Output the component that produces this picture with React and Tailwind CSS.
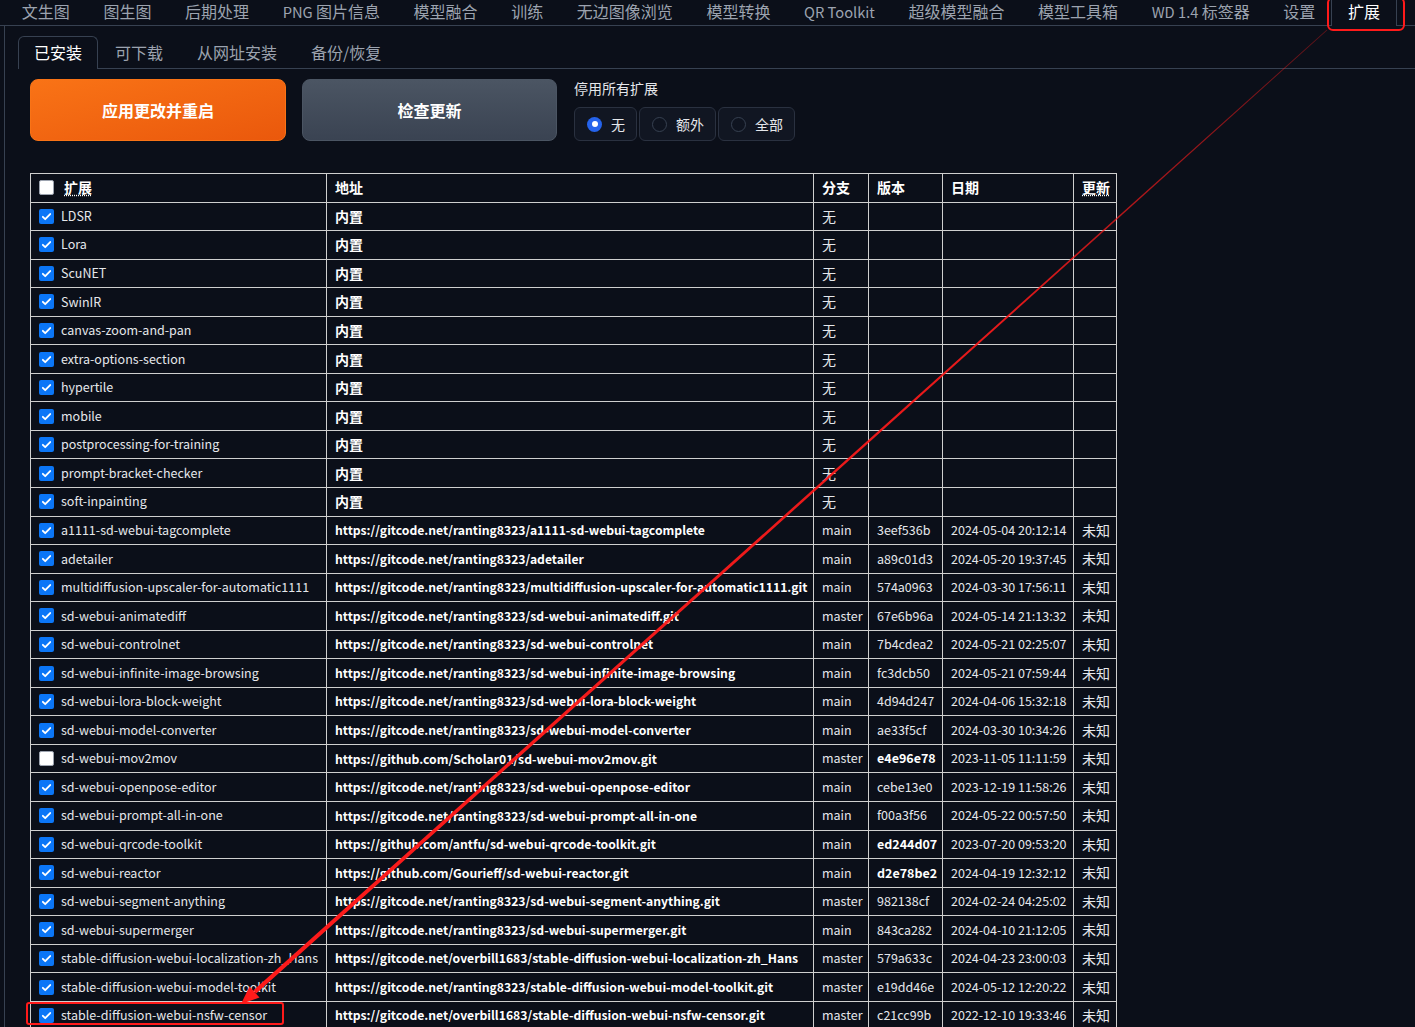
import React from 'react'

// Latin runs in the tab bar are a bit narrower than the CJK ones
const topTabs = [['文生图'], ['图生图'], ['后期处理'], ['PNG ', '图片信息'], ['模型融合'], ['训练'], ['无边图像浏览'], ['模型转换'], ['QR Toolkit', ''], ['超级模型融合'], ['模型工具箱'], ['WD 1.4 ', '标签器'], ['设置'], ['扩展']]
const subTabs = ['已安装', '可下载', '从网址安装', '备份/恢复']

const builtins = ['LDSR', 'Lora', 'ScuNET', 'SwinIR', 'canvas-zoom-and-pan', 'extra-options-section', 'hypertile', 'mobile', 'postprocessing-for-training', 'prompt-bracket-checker', 'soft-inpainting']

const gc = 'https://gitcode.net/ranting8323/'
const extensions = [
    ['a1111-sd-webui-tagcomplete', gc + 'a1111-sd-webui-tagcomplete', 'main', '3eef536b', '2024-05-04 20:12:14'],
    ['adetailer', gc + 'adetailer', 'main', 'a89c01d3', '2024-05-20 19:37:45'],
    ['multidiffusion-upscaler-for-automatic1111', gc + 'multidiffusion-upscaler-for-automatic1111.git', 'main', '574a0963', '2024-03-30 17:56:11'],
    ['sd-webui-animatediff', gc + 'sd-webui-animatediff.git', 'master', '67e6b96a', '2024-05-14 21:13:32'],
    ['sd-webui-controlnet', gc + 'sd-webui-controlnet', 'main', '7b4cdea2', '2024-05-21 02:25:07'],
    ['sd-webui-infinite-image-browsing', gc + 'sd-webui-infinite-image-browsing', 'main', 'fc3dcb50', '2024-05-21 07:59:44'],
    ['sd-webui-lora-block-weight', gc + 'sd-webui-lora-block-weight', 'main', '4d94d247', '2024-04-06 15:32:18'],
    ['sd-webui-model-converter', gc + 'sd-webui-model-converter', 'main', 'ae33f5cf', '2024-03-30 10:34:26'],
    ['sd-webui-mov2mov', 'https://github.com/Scholar01/sd-webui-mov2mov.git', 'master', 'e4e96e78', '2023-11-05 11:11:59', true, true],
    ['sd-webui-openpose-editor', gc + 'sd-webui-openpose-editor', 'main', 'cebe13e0', '2023-12-19 11:58:26'],
    ['sd-webui-prompt-all-in-one', gc + 'sd-webui-prompt-all-in-one', 'main', 'f00a3f56', '2024-05-22 00:57:50'],
    ['sd-webui-qrcode-toolkit', 'https://github.com/antfu/sd-webui-qrcode-toolkit.git', 'main', 'ed244d07', '2023-07-20 09:53:20', true],
    ['sd-webui-reactor', 'https://github.com/Gourieff/sd-webui-reactor.git', 'main', 'd2e78be2', '2024-04-19 12:32:12', true],
    ['sd-webui-segment-anything', gc + 'sd-webui-segment-anything.git', 'master', '982138cf', '2024-02-24 04:25:02'],
    ['sd-webui-supermerger', gc + 'sd-webui-supermerger.git', 'main', '843ca282', '2024-04-10 21:12:05'],
    ['stable-diffusion-webui-localization-zh_Hans', 'https://gitcode.net/overbill1683/stable-diffusion-webui-localization-zh_Hans', 'master', '579a633c', '2024-04-23 23:00:03'],
    ['stable-diffusion-webui-model-toolkit', gc + 'stable-diffusion-webui-model-toolkit.git', 'master', 'e19dd46e', '2024-05-12 12:20:22'],
    ['stable-diffusion-webui-nsfw-censor', 'https://gitcode.net/overbill1683/stable-diffusion-webui-nsfw-censor.git', 'master', 'c21cc99b', '2022-12-10 19:33:46'],
]

const Check = ({ checked }) => (
    checked ? (
        <span className="flex h-[15px] w-[15px] shrink-0 items-center justify-center rounded-[2px] bg-[#0b76f7]">
            <svg width="11" height="11" viewBox="0 0 12 12" fill="none">
                <path d="M2 6.3l2.6 2.6L10 3.3" stroke="#fff" strokeWidth="2" strokeLinecap="round" strokeLinejoin="round" />
            </svg>
        </span>
    ) : (
        <span className="h-[15px] w-[15px] shrink-0 rounded-[2px] border border-[#9ca3af] bg-white"></span>
    )
)

const Radio = ({ label, selected }) => (
    <div className="flex h-[34px] items-center gap-[9px] rounded-md border border-[#2a3140] bg-[#111622] pl-[12px] pr-[11px] text-[14px] text-[#e5e7eb]">
        {selected ? (
            <span className="flex h-[15px] w-[15px] items-center justify-center rounded-full bg-[#2563eb]">
                <span className="h-[6px] w-[6px] rounded-full bg-white"></span>
            </span>
        ) : (
            <span className="h-[15px] w-[15px] rounded-full border border-[#374151] bg-[#0f1420]"></span>
        )}
        {label}
    </div>
)

const cell = 'border border-[#cfcfcf] px-2 whitespace-nowrap overflow-hidden'
const lat = ' text-[12.5px]'
const cjk = ' text-[14px]'

export default function App() {
    return (
        <div className="relative h-[1027px] w-[1415px] overflow-hidden bg-[#0b0f19] font-['Noto_Sans_CJK_SC',sans-serif] text-[#e5e7eb]">
            {/* top tab bar */}
            <nav className="flex h-[26px] border-b border-[#374151] pl-[5px]">
                {topTabs.map(([a, b]) => {
                    const label = b === undefined
                        ? a
                        : <><span className="text-[14.7px]">{a}</span>{b}</>
                    return a === '扩展' ? (
                        <div key={a} className="ml-[-1px] h-[26px] border-x border-[#374151] bg-[#0b0f19] px-4 text-[16px] leading-[22px] text-white">{label}</div>
                    ) : (
                        <div key={a} className="px-[16.8px] text-[16px] leading-[22px] text-[#9ca3af] whitespace-nowrap">{label}</div>
                    )
                })}
            </nav>

            <div className="ml-[4px] border-l border-[#374151] pl-[13px] pt-[10px]">
                {/* sub tabs */}
                <div className="flex h-[33px] border-b border-[#374151]">
                    {subTabs.map((t, i) => (
                        i === 0 ? (
                            <div key={t} className="h-[33px] rounded-t-md border-x border-t border-[#374151] bg-[#0b0f19] px-[15px] text-[16px] leading-[31px] text-white">{t}</div>
                        ) : (
                            <div key={t} className="h-[32px] border border-transparent px-4 text-[16px] leading-[31px] text-[#9ca3af]">{t}</div>
                        )
                    ))}
                </div>

                <div className="pl-[12px] pt-[10px]">
                    <div className="flex items-start">
                        <button className="h-[62px] w-[256px] rounded-lg border border-[#f97316] bg-gradient-to-br from-[#f97316] to-[#ea580c] text-[16px] font-bold text-white">应用更改并重启</button>
                        <button className="ml-4 h-[62px] w-[255px] rounded-lg border border-[#4b5563] bg-gradient-to-b from-[#4b5563] to-[#3a4352] text-[16px] font-bold text-white">检查更新</button>
                        <div className="ml-[17px]">
                            <div className="text-[14px] leading-[18px] text-[#e5e7eb]">停用所有扩展</div>
                            <div className="mt-[10px] flex gap-[2px]">
                                <Radio label="无" selected />
                                <Radio label="额外" />
                                <Radio label="全部" />
                            </div>
                        </div>
                    </div>

                    <table className="mt-[32px] w-[1087px] table-fixed border-collapse">
                        <colgroup>
                            <col className="w-[296px]" />
                            <col className="w-[487px]" />
                            <col className="w-[55px]" />
                            <col className="w-[74px]" />
                            <col className="w-[131px]" />
                            <col className="w-[43px]" />
                        </colgroup>
                        <thead>
                            <tr className="h-[28.55px] text-left text-[14px] font-bold text-white">
                                <th className={cell}>
                                    <div className="flex items-center gap-[10px]">
                                        <Check checked={false} />
                                        <span className="underline decoration-dotted underline-offset-2">扩展</span>
                                    </div>
                                </th>
                                <th className={cell}>地址</th>
                                <th className={cell}>分支</th>
                                <th className={cell}>版本</th>
                                <th className={cell}>日期</th>
                                <th className={cell}><span className="underline decoration-dotted underline-offset-2">更新</span></th>
                            </tr>
                        </thead>
                        <tbody>
                            {builtins.map((name) => (
                                <tr key={name} className="h-[28.55px]">
                                    <td className={cell + lat}>
                                        <div className="flex items-center gap-[7px]"><Check checked />{name}</div>
                                    </td>
                                    <td className={cell + cjk + ' font-bold text-white'}>内置</td>
                                    <td className={cell + cjk}>无</td>
                                    <td className={cell}></td>
                                    <td className={cell}></td>
                                    <td className={cell}></td>
                                </tr>
                            ))}
                            {extensions.map(([name, url, branch, ver, date, github, off]) => (
                                <tr key={name} className="h-[28.55px]">
                                    <td className={cell + lat}>
                                        <div className="flex items-center gap-[7px]"><Check checked={!off} />{name}</div>
                                    </td>
                                    <td className={cell + ' text-[12.2px] font-bold text-white'}>{url}</td>
                                    <td className={cell + lat}>{branch}</td>
                                    <td className={cell + lat + (github ? ' font-bold text-white' : '')}>{ver}</td>
                                    <td className={cell + lat}>{date}</td>
                                    <td className={cell + cjk}>未知</td>
                                </tr>
                            ))}
                        </tbody>
                    </table>
                </div>
            </div>

            {/* red annotation overlay */}
            <div className="pointer-events-none absolute left-[1327px] top-[-3px] h-[34px] w-[78px] rounded-md border-[2.5px] border-[#ff1a1a]"></div>
            <div className="pointer-events-none absolute left-[26px] top-[1002px] h-[23px] w-[258px] rounded-[3px] border-2 border-[#ff1a1a]"></div>
            <svg className="pointer-events-none absolute left-0 top-0" width="1415" height="1027">
                <defs>
                    <linearGradient id="arrowFade" x1="1327" y1="30" x2="241" y2="1004" gradientUnits="userSpaceOnUse">
                        <stop offset="0" stopColor="#ff1a1a" stopOpacity="0.35" />
                        <stop offset="0.3" stopColor="#ff1a1a" stopOpacity="0.9" />
                        <stop offset="1" stopColor="#ff1a1a" />
                    </linearGradient>
                </defs>
                <polygon points="1327.3,30.3 1326.7,29.7 253.4,990.4 256.2,993.6" fill="url(#arrowFade)" />
                <polygon points="241,1004 249.5,986.5 259.5,997.5" fill="#ff1a1a" />
            </svg>
        </div>
    )
}
